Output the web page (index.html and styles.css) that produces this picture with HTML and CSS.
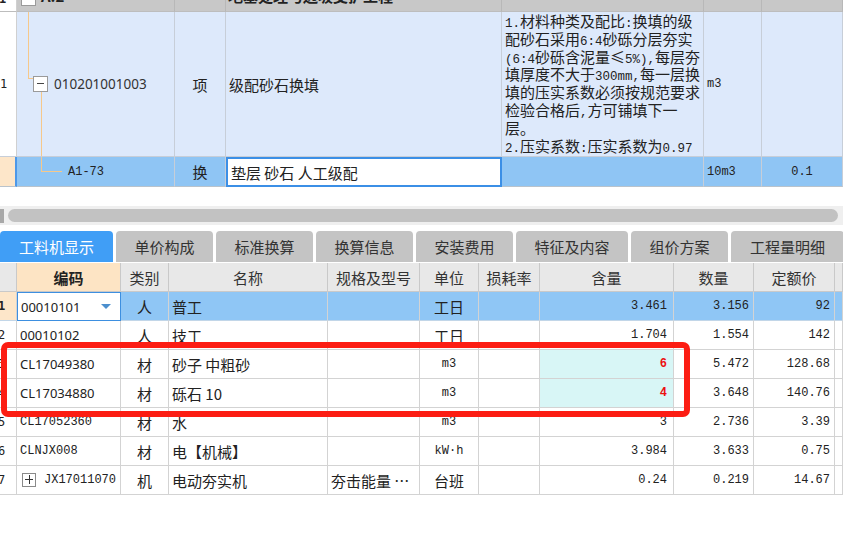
FILE: index.html
```html
<!DOCTYPE html>
<html lang="zh-CN">
<head>
<meta charset="utf-8">
<title>工料机显示</title>
<link rel="stylesheet" href="styles.css">
</head>
<body>
<div class="page">
  <section class="top">
    <div class="trow hdr">
      <div class="c num"><span class="clip">1</span></div>
      <div class="c code"><span class="tbox small"></span><span class="clip b">A.2</span></div>
      <div class="c"></div>
      <div class="c"><span class="clip b">地基处理与边坡支护工程</span></div>
      <div class="c"></div>
      <div class="c"></div>
      <div class="c"></div>
    </div>
    <div class="trow r1">
      <div class="c num mid">1</div>
      <div class="c code mid">
        <span class="vl vl1"></span><span class="hl hl1"></span>
        <span class="tbox minus"></span><span class="vl vl2"></span>
        <span class="codetxt">010201001003</span>
      </div>
      <div class="c mid center">项</div>
      <div class="c mid pl">级配砂石换填</div>
      <div class="c feat">
        <span class="ln"><span class="a">1.</span>材料种类及配比<span class="a">:</span>换填的级</span>
        <span class="ln">配砂石采用<span class="a">6:4</span>砂砾分层夯实</span>
        <span class="ln"><span class="a">(6:4</span>砂砾含泥量≤<span class="a">5%),</span>每层夯</span>
        <span class="ln">填厚度不大于<span class="a">300mm,</span>每一层换</span>
        <span class="ln">填的压实系数必须按规范要求</span>
        <span class="ln">检验合格后<span class="a">,</span>方可铺填下一</span>
        <span class="ln">层。</span>
        <span class="ln"><span class="a">2.</span>压实系数<span class="a">:</span>压实系数为<span class="a">0.97</span></span>
      </div>
      <div class="c mid pl mono">m3</div>
      <div class="c"></div>
    </div>
    <div class="trow r2">
      <div class="c num peach"></div>
      <div class="c code mid"><span class="vl vl3"></span><span class="hl hl3"></span><span class="mono sub">A1-73</span></div>
      <div class="c mid center">换</div>
      <div class="c mid pl edit">垫层 砂石 人工级配</div>
      <div class="c"></div>
      <div class="c mid pl mono">10m3</div>
      <div class="c mid center mono">0.1</div>
    </div>
  </section>

  <div class="hscroll"><span class="hbtn"></span><span class="thumb"></span></div>

  <nav class="tabs">
    <span class="tab active w113">工料机显示</span>
    <span class="tab w97">单价构成</span>
    <span class="tab w97">标准换算</span>
    <span class="tab w97">换算信息</span>
    <span class="tab w97">安装费用</span>
    <span class="tab w112">特征及内容</span>
    <span class="tab w97">组价方案</span>
    <span class="tab w113">工程量明细</span>
  </nav>

  <section class="grid">
    <div class="grow ghead">
      <div class="g"></div>
      <div class="g center peachh b">编码</div>
      <div class="g center">类别</div>
      <div class="g center">名称</div>
      <div class="g center">规格及型号</div>
      <div class="g center">单位</div>
      <div class="g center">损耗率</div>
      <div class="g center">含量</div>
      <div class="g center">数量</div>
      <div class="g center">定额价</div>
      <div class="g"></div>
    </div>
    <div class="grow sel">
      <div class="g rn peach b">1</div>
      <div class="g pl sans input">00010101<span class="tri"></span></div>
      <div class="g center">人</div>
      <div class="g pl">普工</div>
      <div class="g"></div>
      <div class="g center">工日</div>
      <div class="g"></div>
      <div class="g right mono pr6">3.461</div>
      <div class="g right mono">3.156</div>
      <div class="g right mono">92</div>
      <div class="g"></div>
    </div>
    <div class="grow">
      <div class="g rn">2</div>
      <div class="g pl sans">00010102</div>
      <div class="g center">人</div>
      <div class="g pl">技工</div>
      <div class="g"></div>
      <div class="g center">工日</div>
      <div class="g"></div>
      <div class="g right mono pr6">1.704</div>
      <div class="g right mono">1.554</div>
      <div class="g right mono">142</div>
      <div class="g"></div>
    </div>
    <div class="grow">
      <div class="g rn">3</div>
      <div class="g pl sans">CL17049380</div>
      <div class="g center">材</div>
      <div class="g pl">砂子 中粗砂</div>
      <div class="g"></div>
      <div class="g center mono">m3</div>
      <div class="g"></div>
      <div class="g right mono pr6 cyan red">6</div>
      <div class="g right mono">5.472</div>
      <div class="g right mono">128.68</div>
      <div class="g"></div>
    </div>
    <div class="grow">
      <div class="g rn">4</div>
      <div class="g pl sans">CL17034880</div>
      <div class="g center">材</div>
      <div class="g pl">砾石 10</div>
      <div class="g"></div>
      <div class="g center mono">m3</div>
      <div class="g"></div>
      <div class="g right mono pr6 cyan red">4</div>
      <div class="g right mono">3.648</div>
      <div class="g right mono">140.76</div>
      <div class="g"></div>
    </div>
    <div class="grow">
      <div class="g rn">5</div>
      <div class="g pl mono">CL17052360</div>
      <div class="g center">材</div>
      <div class="g pl">水</div>
      <div class="g"></div>
      <div class="g center mono">m3</div>
      <div class="g"></div>
      <div class="g right mono pr6">3</div>
      <div class="g right mono">2.736</div>
      <div class="g right mono">3.39</div>
      <div class="g"></div>
    </div>
    <div class="grow">
      <div class="g rn">6</div>
      <div class="g pl mono">CLNJX008</div>
      <div class="g center">材</div>
      <div class="g pl">电【机械】</div>
      <div class="g"></div>
      <div class="g center mono">kW·h</div>
      <div class="g"></div>
      <div class="g right mono pr6">3.984</div>
      <div class="g right mono">3.633</div>
      <div class="g right mono">0.75</div>
      <div class="g"></div>
    </div>
    <div class="grow">
      <div class="g rn">7</div>
      <div class="g pl mono"><span class="plus"></span>JX17011070</div>
      <div class="g center">机</div>
      <div class="g pl">电动夯实机</div>
      <div class="g pl">夯击能量 …</div>
      <div class="g center">台班</div>
      <div class="g"></div>
      <div class="g right mono pr6">0.24</div>
      <div class="g right mono">0.219</div>
      <div class="g right mono">14.67</div>
      <div class="g"></div>
    </div>
  </section>

  <div class="mark"></div>
</div>
</body>
</html>
```

FILE: styles.css
```css
html, body {
  margin: 0;
  padding: 0;
  background: #fff;
}
body {
  width: 843px;
  height: 560px;
  overflow: hidden;
  font-family: "Noto Sans CJK SC", "Noto Sans", sans-serif;
  font-size: 15px;
  color: #222;
}
.page {
  position: relative;
  width: 843px;
  height: 560px;
}

/* ---------- top tree table ---------- */
.trow {
  display: grid;
  grid-template-columns: 17px 158px 51px 276px 202px 58px 81px;
}
.trow > .c {
  box-sizing: border-box;
  border-right: 1px solid #c7ced8;
  border-bottom: 1px solid #c7ced8;
  background: #dde9fb;
  position: relative;
  overflow: hidden;
  white-space: nowrap;
}
.trow > .c.num {
  background: #fff;
  border-right-color: #d0d0d0;
  padding-left: 0;
  font-family: "DejaVu Sans Mono", monospace;
  font-size: 12px;
}
.hdr { height: 12px; }
.hdr > .c { background: #c8c8c8; border-bottom: 1px solid #bdbdbd; border-right-color: #b8b8b8; }
.hdr > .c.num { background: #fff; }
.clip {
  display: block;
  line-height: 16px;
  margin-top: -12px;
  padding-left: 2px;
}
.hdr .c.num .clip { margin-left: -3px; font-weight: bold; margin-top: -9px; }
.hdr .code .clip { padding-left: 24px; }
.b { font-weight: bold; }
.r1 { height: 145px; }
.r2 { height: 30px; }
.r2 > .c { background: #8fc5f4; border-bottom-color: #b9c3cc; }
.r2 > .c.num.peach { background: #fde6c9; border-right: 2px solid #4d98e8; }

.mid { display: flex; align-items: center; }
.center { justify-content: center; text-align: center; }
.pl { padding-left: 3px; }
.mono {
  font-family: "Liberation Mono", "DejaVu Sans Mono", monospace;
  font-size: 12px;
}
.sans {
  font-family: "Noto Sans", sans-serif;
  font-size: 13px;
}
.num.mid { padding-left: 1px; }
.codetxt {
  font-family: "Noto Sans", sans-serif;
  font-size: 13.5px;
  margin-left: 37px;
  color: #333;
}
.sub { margin-left: 51px; }
.feat {
  display: flex;
  flex-direction: column;
  font-size: 15px;
  padding: 0 0 0 3px;
  white-space: nowrap;
  color: #222;
}
.feat .ln {
  display: block;
  height: 17.8px;
  line-height: 17.8px;
}
.feat .a {
  font-family: "Liberation Mono", "DejaVu Sans Mono", monospace;
  font-size: 12.5px;
  line-height: 1;
}
.edit {
  background: #fff !important;
  border: 2px solid #3b8fe6 !important;
}

/* tree lines */
.vl, .hl { position: absolute; background: #f6c88a; }
.vl1 { left: 11px; top: 0; width: 1px; height: 66px; }
.hl1 { left: 11px; top: 66px; width: 6px; height: 1px; }
.vl2 { left: 24px; top: 80px; width: 1px; height: 65px; }
.vl3 { left: 24px; top: 0; width: 1px; height: 14px; }
.hl3 { left: 24px; top: 14px; width: 21px; height: 1px; }
.tbox {
  position: absolute;
  box-sizing: border-box;
  width: 15px;
  height: 16px;
  border: 1px solid #9a9a9a;
  background: #fff;
}
.tbox.small { left: 4px; top: -10px; }
.tbox.minus { left: 16px; top: 64px; }
.tbox.minus::after {
  content: "";
  position: absolute;
  left: 3px;
  top: 6px;
  width: 7px;
  height: 1px;
  background: #444;
}

/* ---------- horizontal scrollbar ---------- */
.hscroll {
  margin-top: 19px;
  height: 19px;
  background: #efefef;
  display: flex;
  align-items: center;
  gap: 4px;
}
.hbtn { width: 4px; height: 14px; background: #a8a8a8; }
.thumb {
  width: 830px;
  height: 13px;
  border-radius: 7px;
  background: #c2c2c2;
}

/* ---------- tabs ---------- */
.tabs {
  margin-top: 6px;
  height: 32px;
  display: flex;
  gap: 3px;
  align-items: flex-end;
  overflow: hidden;
}
.tab {
  flex: none;
  height: 31px;
  border-radius: 4px 4px 0 0;
  background: #c4c4c4;
  color: #333;
  font-size: 15px;
  display: flex;
  align-items: center;
  justify-content: center;
  box-sizing: border-box;
  margin-bottom: 1px;
}
.tab.active { background: #409ef6; color: #fff; }
.w113 { width: 113px; }
.w112 { width: 112px; }
.w97 { width: 97px; }

/* ---------- bottom grid ---------- */
.grow {
  display: grid;
  grid-template-columns: 17px 104px 48px 159px 92px 59px 61px 134px 80px 81px 8px;
  height: 29px;
}
.grow > .g {
  box-sizing: border-box;
  border-right: 1px solid #d3d3d3;
  border-bottom: 1px solid #d3d3d3;
  display: flex;
  align-items: center;
  white-space: nowrap;
  overflow: hidden;
  background: #fff;
}
.ghead { height: 29px; }
.ghead > .g {
  background: #e8e8e8;
  border-right-color: #c9c9c9;
  border-bottom-color: #c9c9c9;
  color: #333;
}
.ghead > .g.peachh { background: #fde4c4; color: #222; }
.sel > .g { background: #8fc6f5; border-bottom-color: #c2d6e8; }
.sel > .g.peach { background: #fde6c9; }
.sel > .g.input {
  background: #fff;
  border: 1px solid #3d8fe0;
  padding-right: 9px;
}
.tri {
  margin-left: auto;
  width: 0;
  height: 0;
  border-left: 5px solid transparent;
  border-right: 5px solid transparent;
  border-top: 5px solid #4c8fce;
}
.rn {
  font-family: "DejaVu Sans Mono", monospace;
  font-size: 12px;
  justify-content: flex-start;
}
.grow > .g.rn { padding-left: 0; text-indent: -2px; }
.right { justify-content: flex-end; padding-right: 4px; }
.pr6 { padding-right: 6px; }
.grow > .g.cyan { background: #d8f6f6; }
.red { color: #ec1010; font-weight: bold; }
.plus {
  position: relative;
  flex: none;
  box-sizing: border-box;
  width: 14px;
  height: 14px;
  border: 1px solid #8a8a8a;
  margin: 0 8px 0 2px;
}
.plus::before, .plus::after {
  content: "";
  position: absolute;
  background: #333;
}
.plus::before { left: 2px; top: 5px; width: 8px; height: 1px; }
.plus::after { left: 6px; top: 1px; width: 1px; height: 9px; }

/* red highlight box drawn over the grid */
.mark {
  position: absolute;
  left: 1px;
  top: 342px;
  width: 689px;
  height: 75px;
  box-sizing: border-box;
  border: 6px solid #fc1d13;
  border-radius: 7px;
}
```
